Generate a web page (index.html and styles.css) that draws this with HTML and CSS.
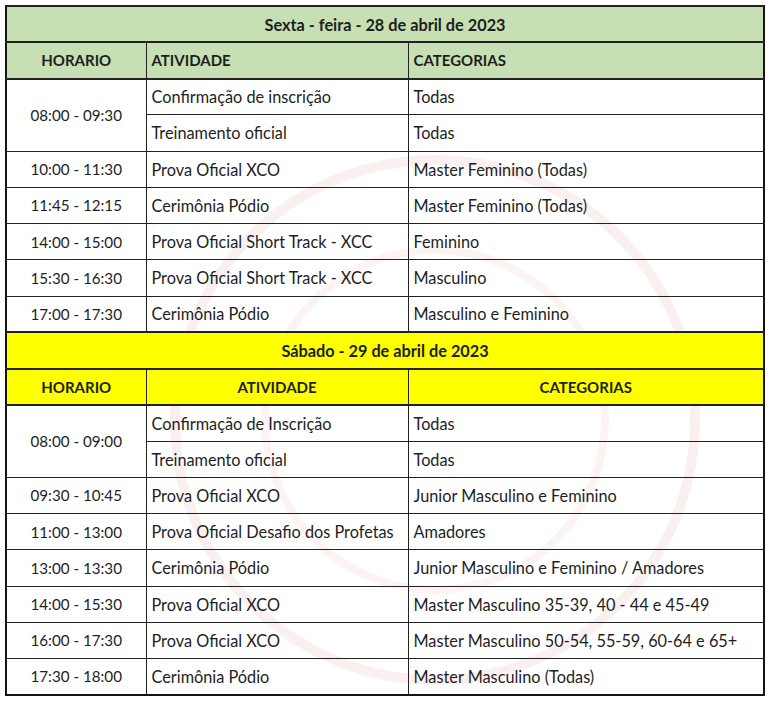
FILE: index.html
```html
<!DOCTYPE html>
<html lang="pt-BR">
<head>
<meta charset="utf-8">
<title>Programação</title>
<link rel="stylesheet" href="styles.css">
</head>
<body>
<div class="page">
  <svg class="watermark" width="600" height="600" viewBox="0 0 600 600" aria-hidden="true">
    <circle cx="300" cy="300" r="260" fill="none" stroke="#fbf0f0" stroke-width="10"/>
    <circle cx="300" cy="300" r="170" fill="none" stroke="#fcf3f3" stroke-width="8"/>
  </svg>
  <table class="schedule">
    <colgroup>
      <col class="c-time">
      <col class="c-act">
      <col class="c-cat">
    </colgroup>
    <tbody>
      <tr class="title green"><td colspan="3">Sexta - feira - 28 de abril de 2023</td></tr>
      <tr class="head green">
        <td class="center">HORARIO</td>
        <td>ATIVIDADE</td>
        <td>CATEGORIAS</td>
      </tr>
      <tr><td class="time" rowspan="2">08:00 - 09:30</td><td>Confirmação de inscrição</td><td>Todas</td></tr>
      <tr><td>Treinamento oficial</td><td>Todas</td></tr>
      <tr><td class="time">10:00 - 11:30</td><td>Prova Oficial XCO</td><td>Master Feminino (Todas)</td></tr>
      <tr><td class="time">11:45 - 12:15</td><td>Cerimônia Pódio</td><td>Master Feminino (Todas)</td></tr>
      <tr><td class="time">14:00 - 15:00</td><td>Prova Oficial Short Track - XCC</td><td>Feminino</td></tr>
      <tr><td class="time">15:30 - 16:30</td><td>Prova Oficial Short Track - XCC</td><td>Masculino</td></tr>
      <tr><td class="time">17:00 - 17:30</td><td>Cerimônia Pódio</td><td>Masculino e Feminino</td></tr>

      <tr class="title yellow"><td colspan="3">Sábado - 29 de abril de 2023</td></tr>
      <tr class="head yellow">
        <td class="center">HORARIO</td>
        <td class="center">ATIVIDADE</td>
        <td class="center">CATEGORIAS</td>
      </tr>
      <tr><td class="time" rowspan="2">08:00 - 09:00</td><td>Confirmação de Inscrição</td><td>Todas</td></tr>
      <tr><td>Treinamento oficial</td><td>Todas</td></tr>
      <tr><td class="time">09:30 - 10:45</td><td>Prova Oficial XCO</td><td>Junior Masculino e Feminino</td></tr>
      <tr><td class="time">11:00 - 13:00</td><td>Prova Oficial Desafio dos Profetas</td><td>Amadores</td></tr>
      <tr><td class="time">13:00 - 13:30</td><td>Cerimônia Pódio</td><td>Junior Masculino e Feminino / Amadores</td></tr>
      <tr><td class="time">14:00 - 15:30</td><td>Prova Oficial XCO</td><td>Master Masculino 35-39, 40 - 44 e 45-49</td></tr>
      <tr><td class="time">16:00 - 17:30</td><td>Prova Oficial XCO</td><td>Master Masculino 50-54, 55-59, 60-64 e 65+</td></tr>
      <tr><td class="time">17:30 - 18:00</td><td>Cerimônia Pódio</td><td>Master Masculino (Todas)</td></tr>
    </tbody>
  </table>
</div>
</body>
</html>
```

FILE: styles.css
```css
html, body {
  margin: 0;
  padding: 0;
  background: #ffffff;
}

.page {
  position: relative;
  padding: 5px 0 0 5px;
  width: 770px;
  height: 701px;
  box-sizing: border-box;
  overflow: hidden;
}

.watermark {
  position: absolute;
  left: 135px;
  top: 120px;
  z-index: 0;
}

.schedule {
  position: relative;
  z-index: 1;
  border-collapse: collapse;
  table-layout: fixed;
  width: 758px;
  border: 2px solid #141414;
  font-family: Lato, "Open Sans", sans-serif;
  font-size: 16.3px;
  color: #1e1e1e;
}

.c-time { width: 140px; }
.c-act { width: 262px; }
.c-cat { width: 356px; }

.schedule tr {
  height: 36.25px;
}

.schedule td {
  border: 1.5px solid #222222;
  padding: 0 5px;
  vertical-align: middle;
  white-space: nowrap;
  overflow: hidden;
}

.schedule td.time {
  text-align: center;
  font-size: 15.2px;
}

.schedule td.center {
  text-align: center;
}

.title td {
  text-align: center;
  font-weight: 700;
  font-size: 16.3px;
  border-top-width: 2px;
  border-bottom-width: 2px;
}

.head td {
  font-weight: 700;
  font-size: 15px;
  border-bottom-width: 2px;
}

.green td {
  background: #c6e0b4;
}

.yellow td {
  background: #ffff00;
}
```
